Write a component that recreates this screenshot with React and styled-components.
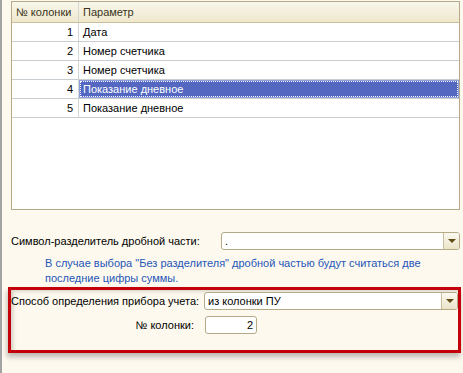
import React from "react";
import styled, { createGlobalStyle } from "styled-components";

const Global = createGlobalStyle`
  html, body { margin: 0; padding: 0; background: #fdf9ee; }
  body { font-family: "Liberation Sans", Arial, sans-serif; }
`;

const Page = styled.div`
  width: 463px;
  height: 373px;
  box-sizing: border-box;
  background: #fdf9ee;
  border-left: 2px solid #a3a3a3;
  padding: 1px 3px 0 9px;
  font-family: "Liberation Sans", Arial, sans-serif;
  font-size: 11px;
  color: #000;
  display: flex;
  flex-direction: column;
`;

const Table = styled.div`
  width: 449px;
  height: 209px;
  box-sizing: border-box;
  border: 1px solid #b5aa86;
  background: #fff;
  display: flex;
  flex-direction: column;
`;

const Row = styled.div`
  display: grid;
  grid-template-columns: 67px 1fr;
  height: ${(p) => (p.$head ? 21 : 19)}px;
  box-sizing: border-box;
  border-bottom: 1px solid ${(p) => (p.$head ? "#c9bf9a" : "#c8cdd1")};
  background: ${(p) =>
    p.$head ? "linear-gradient(#f9f7ec, #efe8cd)" : "#fff"};
`;

const Cell = styled.div`
  display: flex;
  align-items: center;
  justify-content: ${(p) => (p.$num ? "flex-end" : "flex-start")};
  padding: ${(p) => (p.$num ? "0 5px 0 0" : "0 0 0 4px")};
  border-right: ${(p) => (p.$first ? "1px solid #d3d6d2" : "none")};
  white-space: nowrap;
  ${(p) =>
    p.$head &&
    `color:#3a3320; justify-content:flex-start; padding:0 0 0 4px;`}
  ${(p) =>
    p.$sel &&
    `background:#5468c2; color:#fff; outline:1px dotted #fff; outline-offset:-2px; box-shadow: inset 0 0 0 1px #8ea0dc;`}
`;

const FieldRow = styled.div`
  display: flex;
  align-items: center;
  height: 18px;
  margin-top: ${(p) => p.$mt || 0}px;
`;

const Label = styled.div`
  width: ${(p) => p.$w}px;
  flex: none;
  text-align: ${(p) => (p.$right ? "right" : "left")};
  padding-right: ${(p) => (p.$right ? 11 : 0)}px;
  box-sizing: border-box;
  white-space: nowrap;
`;

const Combo = styled.div`
  flex: 1;
  height: 18px;
  box-sizing: border-box;
  border: 1px solid #b5aa86;
  border-radius: 3px;
  background: #fff;
  display: flex;
  align-items: center;
  padding-left: 3px;
`;

const ComboText = styled.div`
  flex: 1;
`;

const DropBtn = styled.div`
  width: 16px;
  height: 16px;
  box-sizing: border-box;
  border-left: 1px solid #c9bf9a;
  background: linear-gradient(#fbf9f1, #ebe4c8);
  border-radius: 0 2px 2px 0;
  display: flex;
  align-items: center;
  justify-content: center;
`;

const Arrow = styled.div`
  width: 0;
  height: 0;
  border-left: 4px solid transparent;
  border-right: 4px solid transparent;
  border-top: 4px solid #5e4c14;
`;

const Hint = styled.div`
  margin: 6px 0 0 34px;
  color: #1f56b8;
  line-height: 15px;
`;

const Frame = styled.div`
  margin: 1px 0 0 -3px;
  width: 453px;
  height: 66px;
  box-sizing: border-box;
  border: 3px solid #c4000a;
  padding: 2px 0 0 0;
  box-shadow: inset 4px 3px 4px -2px rgba(0, 0, 0, 0.18),
    -1px 4px 5px rgba(0, 0, 0, 0.25);
  display: flex;
  flex-direction: column;
`;

const Input = styled.div`
  width: 52px;
  height: 18px;
  box-sizing: border-box;
  border: 1px solid #b5aa86;
  border-radius: 3px;
  background: #fff;
  text-align: right;
  padding-right: 3px;
  line-height: 16px;
`;

const rows = [
  ["1", "Дата"],
  ["2", "Номер счетчика"],
  ["3", "Номер счетчика"],
  ["4", "Показание дневное", true],
  ["5", "Показание дневное"],
];

export default function App() {
  return (
    <>
      <Global />
      <Page>
        <Table>
          <Row $head>
            <Cell $head $first>№ колонки</Cell>
            <Cell $head>Параметр</Cell>
          </Row>
          {rows.map(([n, t, s]) => (
            <Row key={n}>
              <Cell $num $first>{n}</Cell>
              <Cell $sel={s}>{t}</Cell>
            </Row>
          ))}
        </Table>
        <FieldRow $mt={22}>
          <Label $w={210}>Символ-разделитель дробной части:</Label>
          <Combo>
            <ComboText>.</ComboText>
            <DropBtn><Arrow /></DropBtn>
          </Combo>
        </FieldRow>
        <Hint>
          В случае выбора "Без разделителя" дробной частью будут считаться две
          <br />
          последние цифры суммы.
        </Hint>
        <Frame>
          <FieldRow>
            <Label $w={193}>Способ определения прибора учета:</Label>
            <Combo>
              <ComboText>из колонки ПУ</ComboText>
              <DropBtn><Arrow /></DropBtn>
            </Combo>
          </FieldRow>
          <FieldRow $mt={6}>
            <Label $w={194} $right>№ колонки:</Label>
            <Input>2</Input>
          </FieldRow>
        </Frame>
      </Page>
    </>
  );
}
